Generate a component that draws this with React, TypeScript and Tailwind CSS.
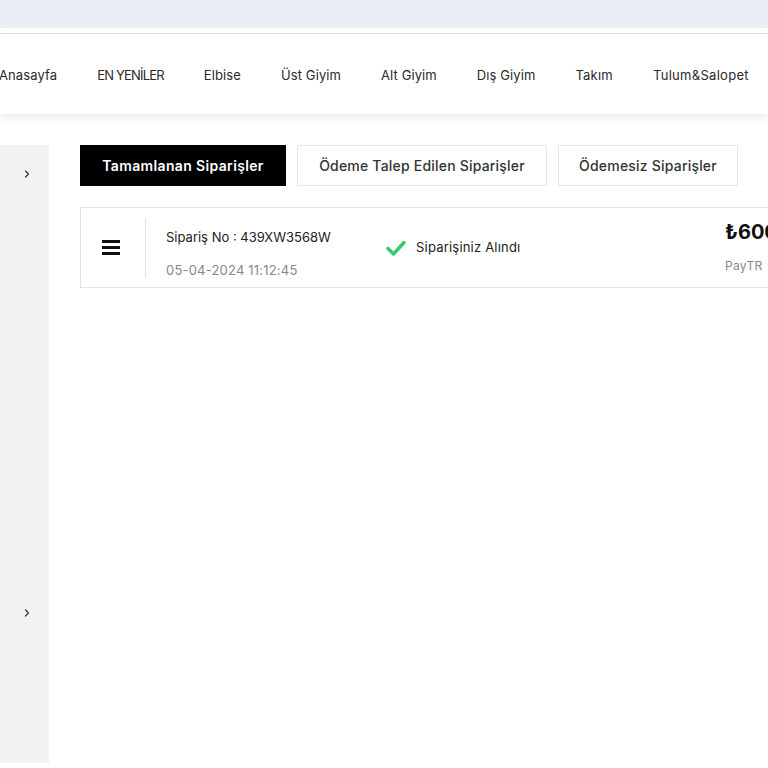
import { ChevronRight } from "lucide-react";

const navItems = [
  { label: "Anasayfa", cls: "tracking-[0.1px]" },
  { label: "EN YENİLER", cls: "tracking-[-0.8px]" },
  { label: "Elbise", cls: "tracking-[0.1px]" },
  { label: "Üst Giyim", cls: "tracking-[0.1px]" },
  { label: "Alt Giyim", cls: "tracking-[0.1px]" },
  { label: "Dış Giyim", cls: "tracking-[0.1px]" },
  { label: "Takım", cls: "tracking-[0.2px]" },
  { label: "Tulum&Salopet", cls: "tracking-[0.3px]" },
];

export default function App() {
  return (
    <div
      className="w-[768px] h-[768px] overflow-hidden bg-white text-[#222]"
      style={{ fontFamily: "Inter, 'Open Sans', sans-serif" }}
    >
      {/* top strip */}
      <div className="h-[28px] bg-[#eceef6]" />
      <div className="h-[6px] bg-white border-b border-[#dedede]" />

      {/* menu */}
      <nav className="h-[80px] pt-[3px] bg-white flex items-center gap-[40px] ml-[-1px] whitespace-nowrap shadow-[0_4px_8px_rgba(0,0,0,0.07)] relative z-10">
        {navItems.map((item) => (
          <span key={item.label} className={`text-[13px] text-[#2a2a2a] ${item.cls}`}>
            {item.label}
          </span>
        ))}
      </nav>

      <div className="flex pt-[31px] bg-white">
        {/* sidebar */}
        <aside className="w-[49px] h-[618px] bg-[#f2f2f2] shrink-0 flex flex-col">
          <div className="flex justify-end pr-[16px] pt-[23px]">
            <ChevronRight size={12} strokeWidth={2.5} className="text-[#333]" />
          </div>
          <div className="flex justify-end pr-[16px] pt-[427px]">
            <ChevronRight size={12} strokeWidth={2.5} className="text-[#333]" />
          </div>
        </aside>

        <main className="pl-[31px] flex-1 min-w-0">
          {/* tabs */}
          <div className="flex gap-[11px] whitespace-nowrap">
            <button className="w-[206px] h-[41px] bg-black text-white text-[14px] font-semibold tracking-[0.35px]">
              Tamamlanan Siparişler
            </button>
            <button className="w-[250px] h-[41px] bg-white border border-[#e6e6e6] text-[14px] font-medium tracking-[0.2px] text-[#333]">
              Ödeme Talep Edilen Siparişler
            </button>
            <button className="w-[180px] h-[41px] bg-white border border-[#e6e6e6] text-[14px] font-medium tracking-[0.2px] text-[#333]">
              Ödemesiz Siparişler
            </button>
          </div>

          {/* order row */}
          <div className="mt-[21px] w-[720px] h-[81px] border border-[#e3e3e3] flex items-center">
            <div className="w-[65px] h-[60px] shrink-0 flex items-center justify-center border-r border-[#e3e3e3]">
              <div className="flex flex-col gap-[3px] ml-[-4px]">
                <span className="block w-[18px] h-[3px] bg-[#111]" />
                <span className="block w-[18px] h-[3px] bg-[#111]" />
                <span className="block w-[18px] h-[3px] bg-[#111]" />
              </div>
            </div>
            <div className="pl-[20px] w-[240px] shrink-0 pt-[13px] flex flex-col gap-[13px]">
              <span className="text-[13px] text-[#222]">Sipariş No : 439XW3568W</span>
              <span className="text-[13px] text-[#888] tracking-[0.2px]">05-04-2024 11:12:45</span>
            </div>
            <div className="flex items-center gap-[10px] w-[339px] shrink-0 pt-[1px]">
              <svg width="20" height="16" viewBox="0 0 20 16">
                <path
                  d="M2 8.5 L7.5 14 L18 2.5"
                  fill="none"
                  stroke="#2ecc71"
                  strokeWidth="3.4"
                  strokeLinecap="round"
                  strokeLinejoin="round"
                />
              </svg>
              <span className="text-[13px] text-[#222] tracking-[0.2px]">Siparişiniz Alındı</span>
            </div>
            <div className="flex flex-col gap-[15px] shrink-0 whitespace-nowrap pt-[2px]">
              <span className="text-[20px] font-bold text-[#111] leading-none">₺600,00</span>
              <span className="text-[12px] text-[#888] tracking-[0.3px]">PayTR</span>
            </div>
          </div>
        </main>
      </div>
    </div>
  );
}
